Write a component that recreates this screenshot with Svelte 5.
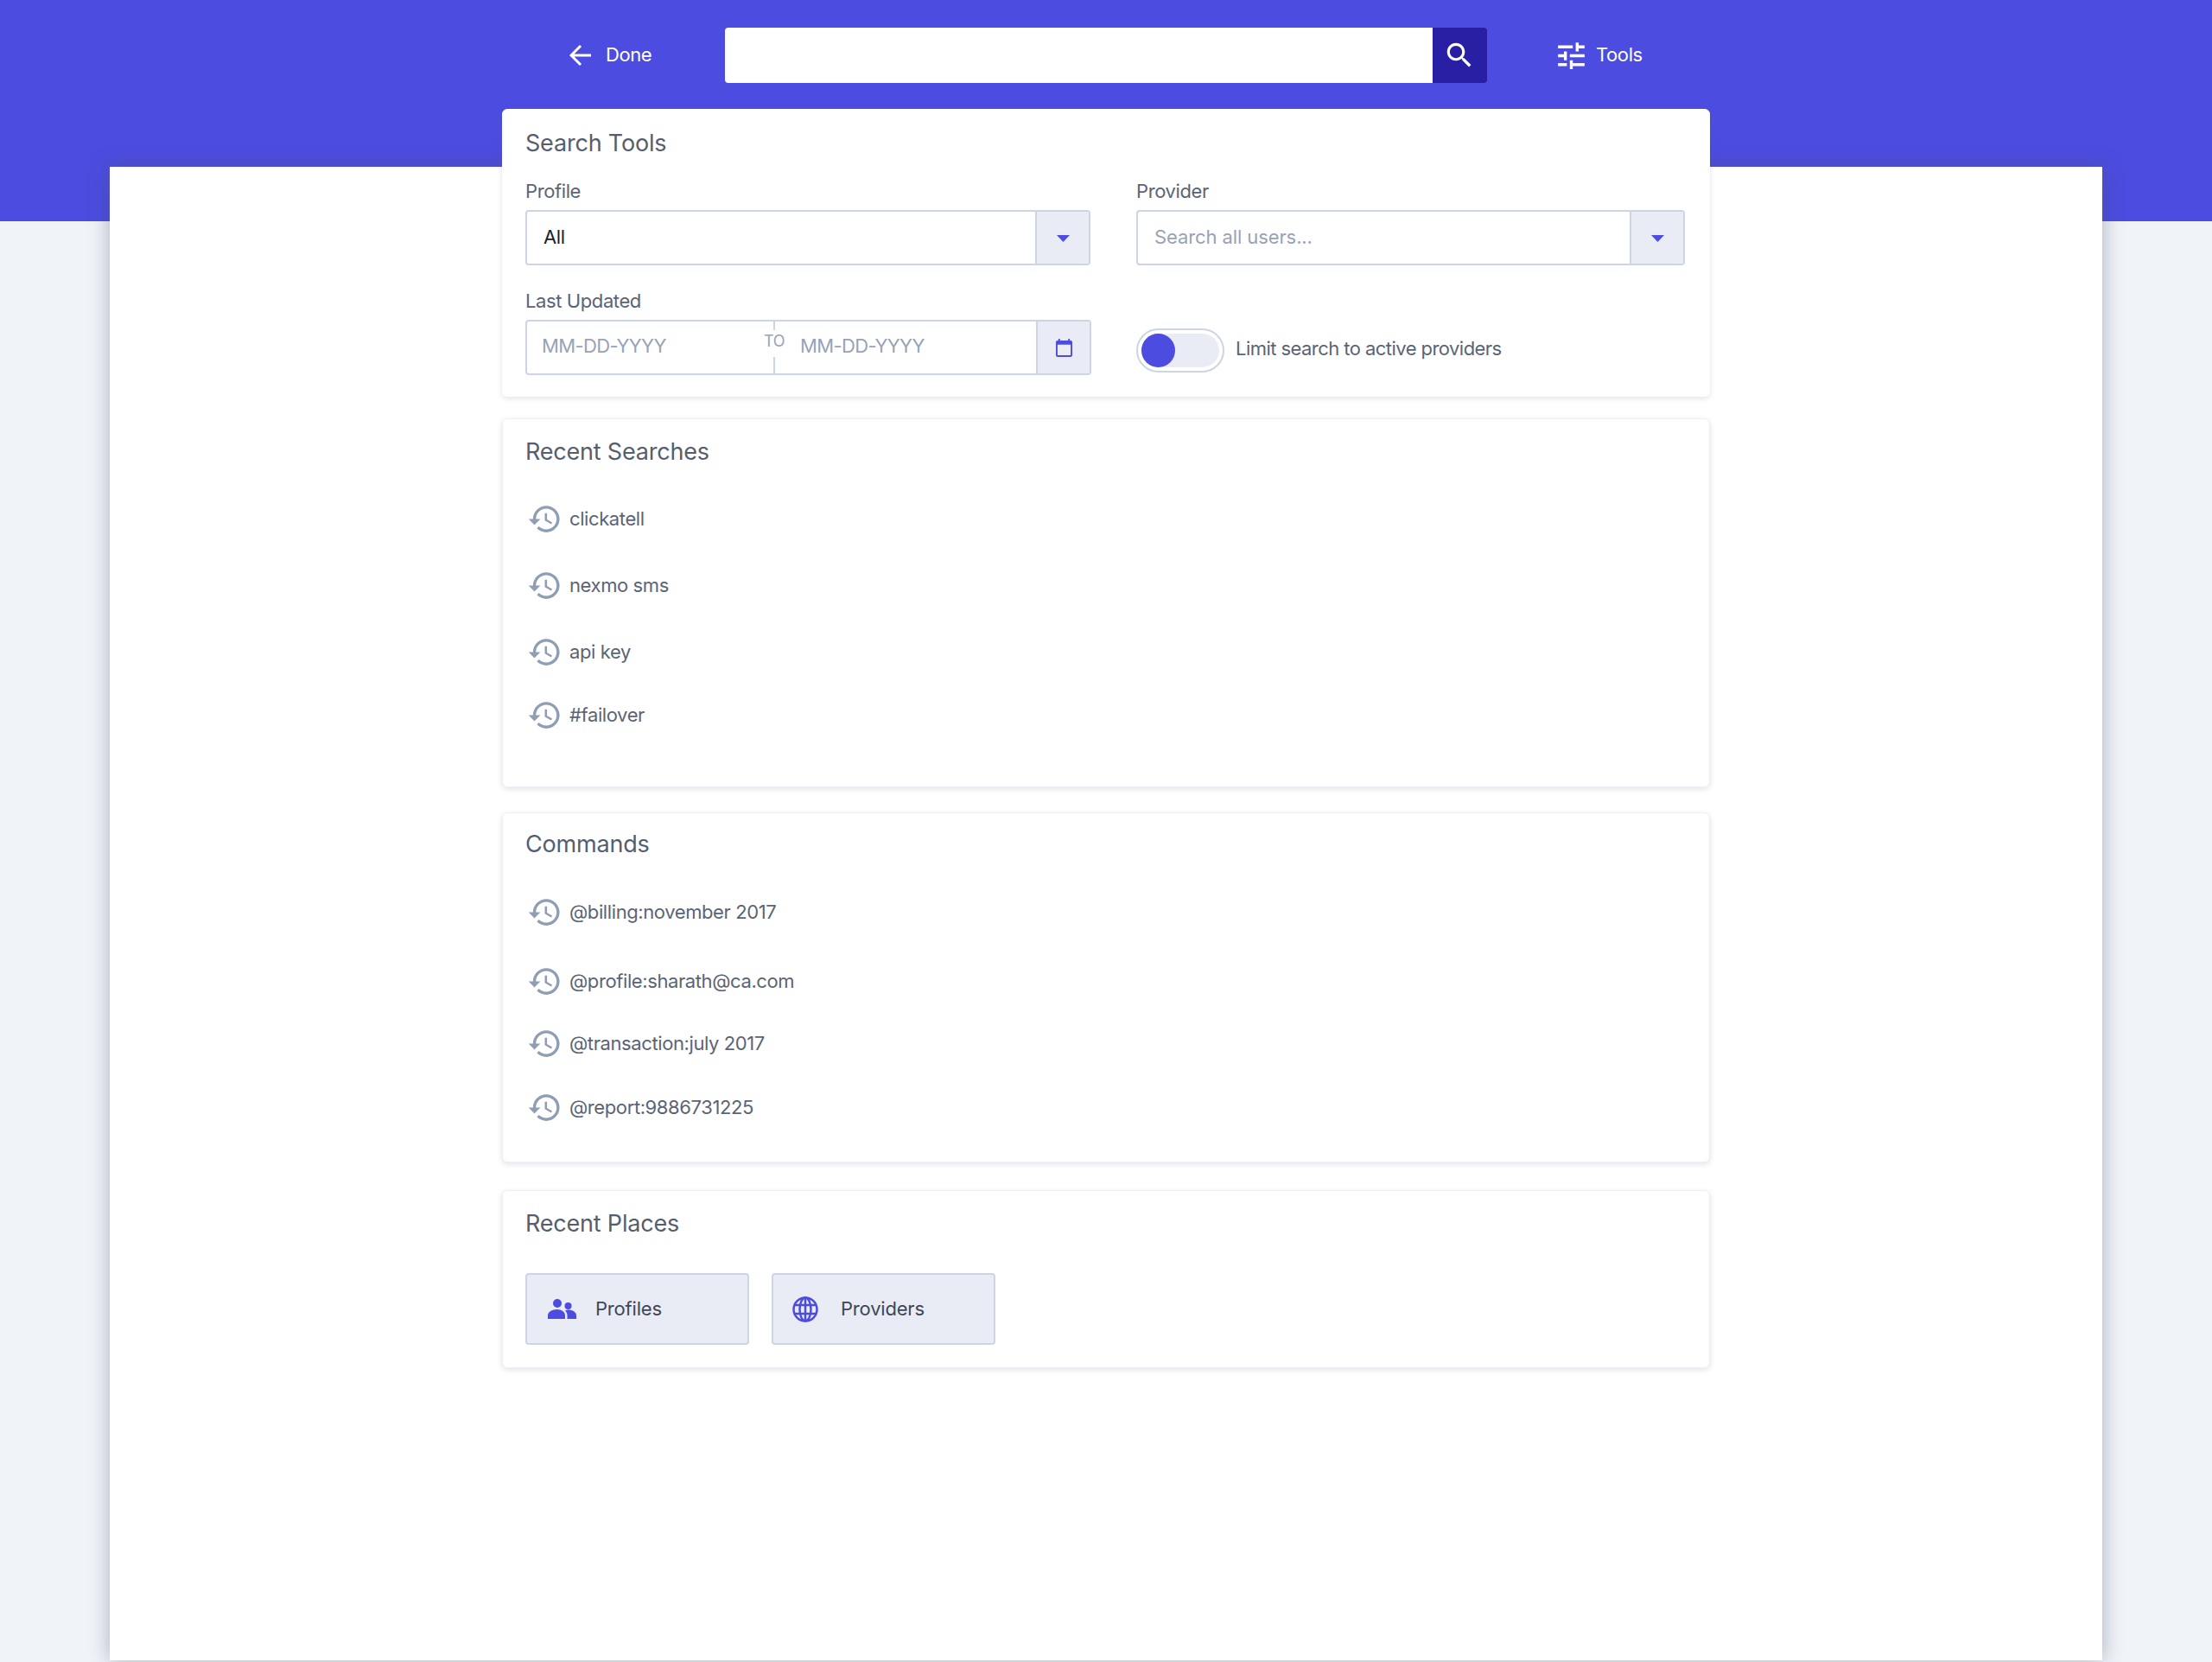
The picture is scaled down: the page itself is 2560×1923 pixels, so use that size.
<script>
  const history = "M13 3c-4.97 0-9 4.03-9 9H1l3.89 3.89.07.14L9 12H6c0-3.87 3.13-7 7-7s7 3.13 7 7-3.13 7-7 7c-1.93 0-3.68-.79-4.94-2.06l-1.42 1.42C8.27 19.99 10.51 21 13 21c4.97 0 9-4.03 9-9s-4.03-9-9-9zm-1 5v5l4.28 2.54.72-1.21-3.5-2.08V8H12z";
  const searches = [
    { text: "clickatell", gap: 0 },
    { text: "nexmo sms", gap: 17 },
    { text: "api key", gap: 17 },
    { text: "#failover", gap: 13 }
  ];
  const commands = [
    { text: "@billing:november 2017", gap: 0 },
    { text: "@profile:sharath@ca.com", gap: 20 },
    { text: "@transaction:july 2017", gap: 12 },
    { text: "@report:9886731225", gap: 14 }
  ];
</script>

{#snippet caret()}
  <svg class="caret" viewBox="0 0 15 8" aria-hidden="true"><polygon points="0,0 15,0 7.5,8" /></svg>
{/snippet}

{#snippet rows(list)}
  <ul class="rows">
    {#each list as row}
      <li class="row" style="margin-top:{row.gap}px">
        <svg class="history" viewBox="0 0 24 24" aria-hidden="true"><path d={history} /></svg>
        <span>{row.text}</span>
      </li>
    {/each}
  </ul>
{/snippet}

<div class="page">
  <header class="topbar">
    <button class="ghost done">
      <svg class="back" viewBox="0 0 26 26" aria-hidden="true"><path d="M25 13H2M13 2 2 13l11 11" /></svg>
      <span>Done</span>
    </button>
    <div class="search">
      <div class="search-input"></div>
      <button class="search-btn" aria-label="Search">
        <svg viewBox="0 0 24 24" aria-hidden="true"><path d="M15.5 14h-.79l-.28-.27C15.41 12.59 16 11.11 16 9.5 16 5.91 13.09 3 9.5 3S3 5.91 3 9.5 5.91 16 9.5 16c1.61 0 3.09-.59 4.23-1.57l.27.28v.79l5 4.99L20.49 19l-4.99-5zm-6 0C7.01 14 5 11.99 5 9.5S7.01 5 9.5 5 14 7.01 14 9.5 11.99 14 9.5 14z" /></svg>
      </button>
    </div>
    <button class="ghost tools">
      <svg viewBox="0 0 24 24" aria-hidden="true"><path d="M3 17v2h6v-2H3zM3 5v2h10V5H3zm10 16v-2h8v-2h-8v-2h-2v6h2zM7 9v2H3v2h4v2h2V9H7zm14 4v-2H11v2h10zm-6-4h2V7h4V5h-4V3h-2v6z" /></svg>
      <span>Tools</span>
    </button>
  </header>

  <main class="sheet">
    <section class="card card-tools">
      <h2>Search Tools</h2>
      <div class="form">
        <div class="field">
          <div class="label">Profile</div>
          <div class="group">
            <div class="value">All</div>
            <div class="addon">{@render caret()}</div>
          </div>
        </div>
        <div class="field">
          <div class="label">Provider</div>
          <div class="group">
            <div class="value placeholder wide">Search all users...</div>
            <div class="addon">{@render caret()}</div>
          </div>
        </div>
        <div class="field date-field">
          <div class="label">Last Updated</div>
          <div class="group">
            <div class="value date placeholder">MM-DD-YYYY</div>
            <div class="to"><span>TO</span></div>
            <div class="value date second placeholder">MM-DD-YYYY</div>
            <div class="addon">
              <svg class="calendar" viewBox="0 0 20 22" aria-hidden="true"><path d="M18 2h-1V0h-2v2H5V0H3v2H2C.9 2 0 2.9 0 4v16c0 1.1.9 2 2 2h16c1.100 0 2-.9 2-2V4c0-1.100-.9-2-2-2zm0 18H2V7h16v13z" /></svg>
            </div>
          </div>
        </div>
        <div class="limit">
          <div class="toggle"><div class="knob"></div></div>
          <span>Limit search to active providers</span>
        </div>
      </div>
    </section>

    <section class="card card-searches">
      <h2>Recent Searches</h2>
      {@render rows(searches)}
    </section>

    <section class="card card-commands">
      <h2>Commands</h2>
      {@render rows(commands)}
    </section>

    <section class="card card-places">
      <h2>Recent Places</h2>
      <div class="places">
        <button class="place">
          <svg class="people" viewBox="0 0 33 23" aria-hidden="true">
            <circle cx="11" cy="5" r="5" />
            <circle cx="23.500" cy="8" r="4" />
            <path d="M0 23v-4c0-4 5-7 10.500-7S20 15 20 19v4zM22.500 23v-4c0-2.500-1-4.200-2.500-5.600 1-.6 2.300-.9 3.500-.9 5 0 9.500 2.400 9.500 6.500v4z" />
          </svg>
          <span>Profiles</span>
        </button>
        <button class="place">
          <svg class="globe" viewBox="0 0 30 30" aria-hidden="true">
            <circle cx="15" cy="15" r="13.500" />
            <ellipse cx="15" cy="15" rx="6.500" ry="13.500" />
            <path d="M15 1.500v27M2.500 10h25M2.500 20h25" />
          </svg>
          <span>Providers</span>
        </button>
      </div>
    </section>
  </main>
</div>

<style>
  :global(body) {
    margin: 0;
    background: #f0f3f8;
  }
  .page {
    min-height: 1923px;
    box-sizing: border-box;
    display: flex;
    flex-direction: column;
    background: linear-gradient(#4c4ce0 256px, #f0f3f8 256px);
    font-family: Inter, "Liberation Sans", sans-serif;
    letter-spacing: -0.4px;
    color: #5b6477;
    overflow: hidden;
    padding-bottom: 2px;
  }
  h2 {
    margin: 0;
    font-weight: 400;
    font-size: 27px;
    line-height: 34px;
    letter-spacing: -0.2px;
    color: #555e70;
  }
  button {
    font: inherit;
    letter-spacing: inherit;
    border: 0;
    padding: 0;
    background: none;
    cursor: pointer;
  }

  /* top bar */
  .topbar {
    height: 126px;
    flex: none;
    box-sizing: border-box;
    padding-top: 32px;
    display: flex;
    align-items: flex-start;
  }
  .ghost {
    height: 64px;
    display: flex;
    align-items: center;
    color: #fff;
    font-size: 22px;
  }
  .ghost span {
    padding-bottom: 3px;
  }
  .done {
    margin-left: 659px;
    width: 180px;
    gap: 16px;
  }
  .back {
    width: 26px;
    height: 26px;
    fill: none;
    stroke: #fff;
    stroke-width: 3;
  }
  .search {
    width: 882px;
    height: 64px;
    display: flex;
  }
  .search-input {
    flex: 1;
    background: #fff;
    border-radius: 4px 0 0 4px;
  }
  .search-btn {
    width: 63px;
    background: #281fa5;
    border-radius: 0 4px 4px 0;
    display: flex;
    align-items: center;
    justify-content: center;
  }
  .search-btn svg {
    width: 38px;
    height: 38px;
    fill: #fff;
    margin: -1px 2px 0 0;
  }
  .tools {
    margin-left: 77px;
    gap: 8px;
  }
  .tools svg {
    width: 41px;
    height: 41px;
    fill: #fff;
  }

  /* sheet */
  .sheet {
    flex: 1;
    margin: 67px 127px 0;
    background: #fff;
    box-shadow: 0 0 22px rgba(70, 80, 110, 0.42);
    display: flex;
    flex-direction: column;
    align-items: center;
  }
  .card {
    width: 1398px;
    box-sizing: border-box;
    background: #fff;
    border-radius: 6px;
    border: 1px solid #eef0f6;
    box-shadow: 0 2px 6px rgba(90, 100, 130, 0.18);
    padding: 0 26px;
  }
  .card-tools {
    margin-top: -67px;
    height: 333px;
    padding-top: 22px;
    border-color: #fff;
  }
  .card-searches {
    margin-top: 25px;
    height: 427px;
    padding-top: 21px;
  }
  .card-commands {
    margin-top: 29px;
    height: 405px;
    padding-top: 19px;
  }
  .card-places {
    margin-top: 32px;
    height: 206px;
    padding-top: 21px;
  }

  /* form */
  .form {
    display: grid;
    grid-template-columns: 654px 635px;
    column-gap: 53px;
    margin-top: 25px;
  }
  .field {
    display: flex;
    flex-direction: column;
  }
  .label {
    font-size: 22px;
    line-height: 26px;
    margin-bottom: 9px;
    color: #5b6477;
  }
  .group {
    height: 64px;
    box-sizing: border-box;
    display: flex;
    border: 2px solid #cdd4e4;
    border-radius: 4px;
    font-size: 22px;
    color: #1a1f2e;
  }
  .value {
    flex: 1;
    display: flex;
    align-items: center;
    padding-left: 19px;
    min-width: 0;
    padding-bottom: 2px;
  }
  .placeholder {
    color: #98a2b8;
  }
  .wide {
    letter-spacing: -0.1px;
  }
  .addon {
    width: 62px;
    flex: none;
    box-sizing: border-box;
    background: #e9ecf5;
    border-left: 2px solid #cdd4e4;
    display: flex;
    align-items: center;
    justify-content: center;
  }
  .caret {
    width: 15px;
    height: 8px;
    fill: #4c4ce0;
    margin-top: 2px;
  }
  .date-field {
    margin-top: 28px;
  }
  .date-field .group {
    width: 655px;
  }
  .date {
    flex: none;
    width: 285px;
    padding-left: 17px;
    box-sizing: border-box;
    padding-bottom: 4px;
    letter-spacing: -0.6px;
  }
  .date.second {
    flex: 1;
    padding-left: 29px;
  }
  .to {
    width: 0;
    position: relative;
    border-left: 2px solid #cdd4e4;
  }
  .to span {
    position: absolute;
    left: -13px;
    top: 10px;
    height: 31px;
    box-sizing: border-box;
    padding-top: 1px;
    font-size: 18px;
    line-height: 24px;
    color: #98a2b8;
    background: #fff;
  }
  .calendar {
    width: 19px;
    height: 21px;
    fill: #4c4ce0;
  }
  .limit {
    display: flex;
    align-items: center;
    gap: 13px;
    margin-top: 73px;
    height: 51px;
    font-size: 22px;
    color: #5b6477;
    letter-spacing: -0.55px;
  }
  .limit span {
    padding-bottom: 5px;
  }
  .toggle {
    width: 102px;
    height: 51px;
    box-sizing: border-box;
    border: 2px solid #cdd4e4;
    border-radius: 26px;
    padding: 4px;
    flex: none;
  }
  .knob {
    height: 39px;
    border-radius: 20px;
    background: #e9ecf5;
    position: relative;
  }
  .knob::before {
    content: "";
    position: absolute;
    left: 0;
    top: 0;
    width: 39px;
    height: 39px;
    border-radius: 50%;
    background: #4c4ce0;
  }

  /* lists */
  .rows {
    list-style: none;
    margin: 0;
    padding: 0;
  }
  .row {
    height: 60px;
    display: flex;
    align-items: center;
    gap: 8px;
    font-size: 22px;
    color: #5b6477;
  }
  .history {
    width: 41px;
    height: 41px;
    fill: #8f9db5;
    margin-left: 2px;
    flex: none;
  }
  .card-commands .rows {
    margin-top: 31px;
  }
  .card-searches .rows {
    margin-top: 30px;
  }

  /* places */
  .places {
    display: flex;
    gap: 26px;
    margin-top: 40px;
  }
  .place {
    width: 259px;
    height: 83px;
    box-sizing: border-box;
    border: 2px solid #cdd4e4;
    border-radius: 4px;
    background: #e9ecf5;
    display: flex;
    align-items: center;
    font-size: 22px;
    color: #3f4757;
    letter-spacing: -0.2px;
  }
  .place span {
    padding-bottom: 2px;
  }
  .people {
    width: 33px;
    height: 23px;
    fill: #4c4ce0;
    margin-left: 24px;
    margin-right: 22px;
  }
  .globe {
    width: 30px;
    height: 30px;
    fill: none;
    stroke: #4c4ce0;
    stroke-width: 2.5;
    margin-left: 22px;
    margin-right: 26px;
  }
</style>
